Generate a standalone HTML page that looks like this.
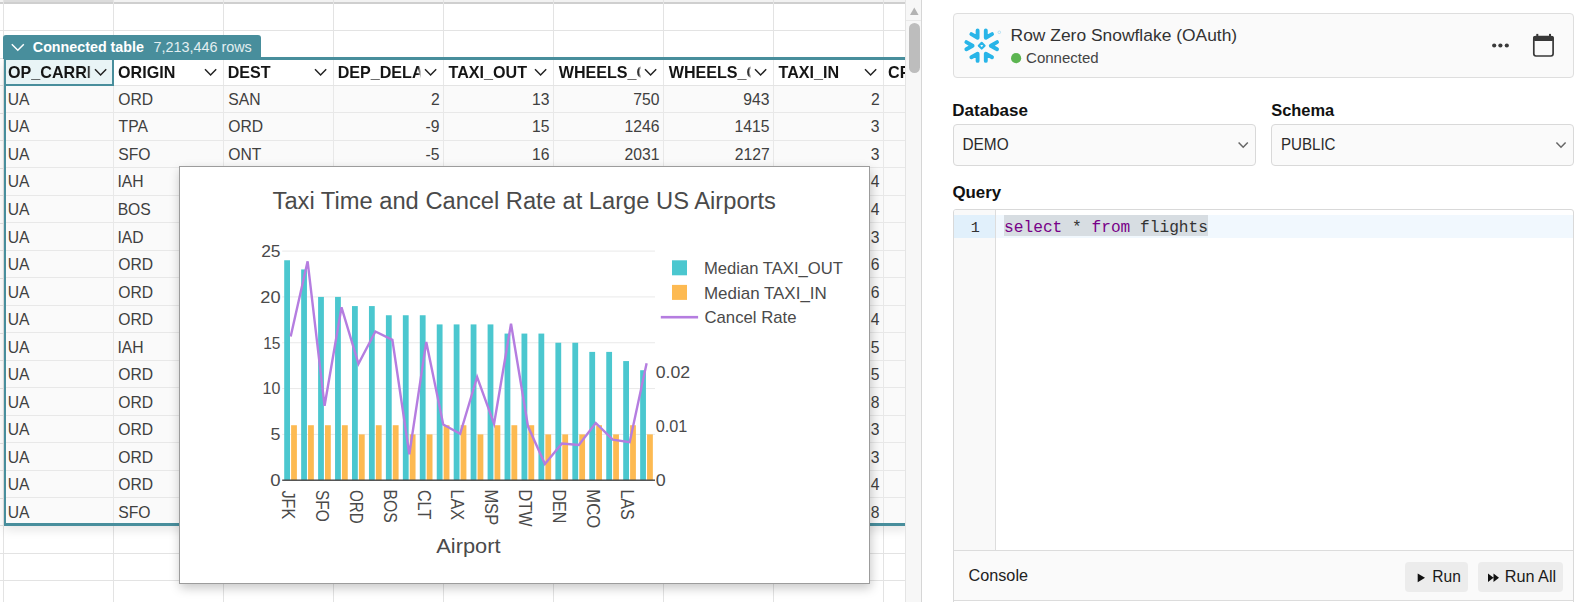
<!DOCTYPE html>
<html><head><meta charset="utf-8"><title>Row Zero</title>
<style>
html,body{margin:0;padding:0;width:1577px;height:602px;overflow:hidden;background:#fff;font-family:"Liberation Sans",sans-serif;}
</style></head><body>
<div style="position:relative;width:1577px;height:602px;overflow:hidden">
<div id="grid" style="position:absolute;left:0;top:0;width:905px;height:602px;overflow:hidden;background:#fff">
<div style="position:absolute;left:0;top:0;width:905px;height:3px;background:#f2f2f2"></div>
<div style="position:absolute;left:3px;top:0;width:110px;height:3px;background:#dcdcdc"></div>
<div style="position:absolute;left:0;top:2px;width:905px;height:2px;background:#cfcfcf"></div>
<div style="position:absolute;left:3px;top:0;width:1px;height:602px;background:#e3e3e3"></div>
<div style="position:absolute;left:113px;top:0;width:1px;height:602px;background:#e3e3e3"></div>
<div style="position:absolute;left:223px;top:0;width:1px;height:602px;background:#e3e3e3"></div>
<div style="position:absolute;left:333px;top:0;width:1px;height:602px;background:#e3e3e3"></div>
<div style="position:absolute;left:443px;top:0;width:1px;height:602px;background:#e3e3e3"></div>
<div style="position:absolute;left:553px;top:0;width:1px;height:602px;background:#e3e3e3"></div>
<div style="position:absolute;left:663px;top:0;width:1px;height:602px;background:#e3e3e3"></div>
<div style="position:absolute;left:773px;top:0;width:1px;height:602px;background:#e3e3e3"></div>
<div style="position:absolute;left:883px;top:0;width:1px;height:602px;background:#e3e3e3"></div>
<div style="position:absolute;left:0;top:30px;width:905px;height:1px;background:#e3e3e3"></div>
<div style="position:absolute;left:0;top:58px;width:905px;height:1px;background:#e3e3e3"></div>
<div style="position:absolute;left:0;top:85px;width:905px;height:1px;background:#e3e3e3"></div>
<div style="position:absolute;left:0;top:113px;width:905px;height:1px;background:#e3e3e3"></div>
<div style="position:absolute;left:0;top:140px;width:905px;height:1px;background:#e3e3e3"></div>
<div style="position:absolute;left:0;top:168px;width:905px;height:1px;background:#e3e3e3"></div>
<div style="position:absolute;left:0;top:195px;width:905px;height:1px;background:#e3e3e3"></div>
<div style="position:absolute;left:0;top:223px;width:905px;height:1px;background:#e3e3e3"></div>
<div style="position:absolute;left:0;top:250px;width:905px;height:1px;background:#e3e3e3"></div>
<div style="position:absolute;left:0;top:278px;width:905px;height:1px;background:#e3e3e3"></div>
<div style="position:absolute;left:0;top:305px;width:905px;height:1px;background:#e3e3e3"></div>
<div style="position:absolute;left:0;top:333px;width:905px;height:1px;background:#e3e3e3"></div>
<div style="position:absolute;left:0;top:360px;width:905px;height:1px;background:#e3e3e3"></div>
<div style="position:absolute;left:0;top:388px;width:905px;height:1px;background:#e3e3e3"></div>
<div style="position:absolute;left:0;top:415px;width:905px;height:1px;background:#e3e3e3"></div>
<div style="position:absolute;left:0;top:443px;width:905px;height:1px;background:#e3e3e3"></div>
<div style="position:absolute;left:0;top:470px;width:905px;height:1px;background:#e3e3e3"></div>
<div style="position:absolute;left:0;top:498px;width:905px;height:1px;background:#e3e3e3"></div>
<div style="position:absolute;left:0;top:525px;width:905px;height:1px;background:#e3e3e3"></div>
<div style="position:absolute;left:0;top:553px;width:905px;height:1px;background:#e3e3e3"></div>
<div style="position:absolute;left:0;top:580px;width:905px;height:1px;background:#e3e3e3"></div>
<div style="position:absolute;left:4px;top:60px;width:905px;height:465px;box-shadow:0 5px 10px rgba(0,0,0,0.10)"></div>
<div style="position:absolute;left:3.5px;top:57px;width:902px;height:468.5px;background:#fafafa"></div>
<div style="position:absolute;left:3.5px;top:57px;width:902px;height:28.5px;background:#fff"></div>
<div style="position:absolute;left:113px;top:57px;width:1px;height:466.5px;background:#e8e8e8"></div>
<div style="position:absolute;left:223px;top:57px;width:1px;height:466.5px;background:#e8e8e8"></div>
<div style="position:absolute;left:333px;top:57px;width:1px;height:466.5px;background:#e8e8e8"></div>
<div style="position:absolute;left:443px;top:57px;width:1px;height:466.5px;background:#e8e8e8"></div>
<div style="position:absolute;left:553px;top:57px;width:1px;height:466.5px;background:#e8e8e8"></div>
<div style="position:absolute;left:663px;top:57px;width:1px;height:466.5px;background:#e8e8e8"></div>
<div style="position:absolute;left:773px;top:57px;width:1px;height:466.5px;background:#e8e8e8"></div>
<div style="position:absolute;left:883px;top:57px;width:1px;height:466.5px;background:#e8e8e8"></div>
<div style="position:absolute;left:3.5px;top:112px;width:902px;height:1px;background:#e8e8e8"></div>
<div style="position:absolute;left:3.5px;top:140px;width:902px;height:1px;background:#e8e8e8"></div>
<div style="position:absolute;left:3.5px;top:167px;width:902px;height:1px;background:#e8e8e8"></div>
<div style="position:absolute;left:3.5px;top:195px;width:902px;height:1px;background:#e8e8e8"></div>
<div style="position:absolute;left:3.5px;top:222px;width:902px;height:1px;background:#e8e8e8"></div>
<div style="position:absolute;left:3.5px;top:250px;width:902px;height:1px;background:#e8e8e8"></div>
<div style="position:absolute;left:3.5px;top:277px;width:902px;height:1px;background:#e8e8e8"></div>
<div style="position:absolute;left:3.5px;top:305px;width:902px;height:1px;background:#e8e8e8"></div>
<div style="position:absolute;left:3.5px;top:332px;width:902px;height:1px;background:#e8e8e8"></div>
<div style="position:absolute;left:3.5px;top:360px;width:902px;height:1px;background:#e8e8e8"></div>
<div style="position:absolute;left:3.5px;top:387px;width:902px;height:1px;background:#e8e8e8"></div>
<div style="position:absolute;left:3.5px;top:415px;width:902px;height:1px;background:#e8e8e8"></div>
<div style="position:absolute;left:3.5px;top:442px;width:902px;height:1px;background:#e8e8e8"></div>
<div style="position:absolute;left:3.5px;top:470px;width:902px;height:1px;background:#e8e8e8"></div>
<div style="position:absolute;left:3.5px;top:497px;width:902px;height:1px;background:#e8e8e8"></div>
<div style="position:absolute;left:3.5px;top:525px;width:902px;height:1px;background:#e8e8e8"></div>
<div style="position:absolute;left:3.5px;top:85px;width:902px;height:1px;background:#e4e4e4"></div>
<div style="position:absolute;left:3.5px;top:58.5px;width:106.5px;height:25px;background:#e9f4f6;border:2px solid #488e9c;border-top:0"></div>
<div style="position:absolute;left:3.5px;top:57px;width:902px;height:2.8px;background:#488e9c"></div>
<div style="position:absolute;left:3.5px;top:57px;width:2px;height:468.5px;background:#488e9c"></div>
<div style="position:absolute;left:3.5px;top:523.0px;width:902px;height:3px;background:#488e9c"></div>
<div style="position:absolute;left:3.4px;top:35px;width:258px;height:24px;background:#488e9c;border-radius:3px 3px 0 0"></div>
<svg style="position:absolute;left:0;top:0" width="905" height="602" viewBox="0 0 905 602">
<path d="M11.8 44.3 L17.8 50.2 L23.8 44.3" fill="none" stroke="#fff" stroke-width="1.5"/>
<text transform="translate(32.83,51.90) scale(0.9959,1)" font-family='"Liberation Sans", sans-serif' font-weight="700" font-size="14.35" fill="#fff" >Connected table</text>
<text transform="translate(153.38,51.90) scale(1.0039,1)" font-family='"Liberation Sans", sans-serif' font-weight="400" font-size="14.35" fill="#e3eff1" >7,213,446 rows</text>
<defs>
<clipPath id="hc0"><rect x="3.5" y="58" width="87" height="28"/></clipPath>
<linearGradient id="hg0" x1="88.0" x2="91.5" y1="0" y2="0" gradientUnits="userSpaceOnUse"><stop offset="0" stop-color="#fff" stop-opacity="1"/><stop offset="1" stop-color="#fff" stop-opacity="0"/></linearGradient>
<mask id="hm0"><rect x="3.5" y="58" width="100" height="28" fill="url(#hg0)"/></mask>
<clipPath id="hc1"><rect x="113.5" y="58" width="87" height="28"/></clipPath>
<linearGradient id="hg1" x1="198.0" x2="201.5" y1="0" y2="0" gradientUnits="userSpaceOnUse"><stop offset="0" stop-color="#fff" stop-opacity="1"/><stop offset="1" stop-color="#fff" stop-opacity="0"/></linearGradient>
<mask id="hm1"><rect x="113.5" y="58" width="100" height="28" fill="url(#hg1)"/></mask>
<clipPath id="hc2"><rect x="223.5" y="58" width="87" height="28"/></clipPath>
<linearGradient id="hg2" x1="308.0" x2="311.5" y1="0" y2="0" gradientUnits="userSpaceOnUse"><stop offset="0" stop-color="#fff" stop-opacity="1"/><stop offset="1" stop-color="#fff" stop-opacity="0"/></linearGradient>
<mask id="hm2"><rect x="223.5" y="58" width="100" height="28" fill="url(#hg2)"/></mask>
<clipPath id="hc3"><rect x="333.5" y="58" width="87" height="28"/></clipPath>
<linearGradient id="hg3" x1="418.0" x2="421.5" y1="0" y2="0" gradientUnits="userSpaceOnUse"><stop offset="0" stop-color="#fff" stop-opacity="1"/><stop offset="1" stop-color="#fff" stop-opacity="0"/></linearGradient>
<mask id="hm3"><rect x="333.5" y="58" width="100" height="28" fill="url(#hg3)"/></mask>
<clipPath id="hc4"><rect x="443.5" y="58" width="87" height="28"/></clipPath>
<linearGradient id="hg4" x1="528.0" x2="531.5" y1="0" y2="0" gradientUnits="userSpaceOnUse"><stop offset="0" stop-color="#fff" stop-opacity="1"/><stop offset="1" stop-color="#fff" stop-opacity="0"/></linearGradient>
<mask id="hm4"><rect x="443.5" y="58" width="100" height="28" fill="url(#hg4)"/></mask>
<clipPath id="hc5"><rect x="553.5" y="58" width="87" height="28"/></clipPath>
<linearGradient id="hg5" x1="638.0" x2="641.5" y1="0" y2="0" gradientUnits="userSpaceOnUse"><stop offset="0" stop-color="#fff" stop-opacity="1"/><stop offset="1" stop-color="#fff" stop-opacity="0"/></linearGradient>
<mask id="hm5"><rect x="553.5" y="58" width="100" height="28" fill="url(#hg5)"/></mask>
<clipPath id="hc6"><rect x="663.5" y="58" width="87" height="28"/></clipPath>
<linearGradient id="hg6" x1="748.0" x2="751.5" y1="0" y2="0" gradientUnits="userSpaceOnUse"><stop offset="0" stop-color="#fff" stop-opacity="1"/><stop offset="1" stop-color="#fff" stop-opacity="0"/></linearGradient>
<mask id="hm6"><rect x="663.5" y="58" width="100" height="28" fill="url(#hg6)"/></mask>
<clipPath id="hc7"><rect x="773.5" y="58" width="87" height="28"/></clipPath>
<linearGradient id="hg7" x1="858.0" x2="861.5" y1="0" y2="0" gradientUnits="userSpaceOnUse"><stop offset="0" stop-color="#fff" stop-opacity="1"/><stop offset="1" stop-color="#fff" stop-opacity="0"/></linearGradient>
<mask id="hm7"><rect x="773.5" y="58" width="100" height="28" fill="url(#hg7)"/></mask>
<clipPath id="hc8"><rect x="883.5" y="58" width="87" height="28"/></clipPath>
<linearGradient id="hg8" x1="968.0" x2="971.5" y1="0" y2="0" gradientUnits="userSpaceOnUse"><stop offset="0" stop-color="#fff" stop-opacity="1"/><stop offset="1" stop-color="#fff" stop-opacity="0"/></linearGradient>
<mask id="hm8"><rect x="883.5" y="58" width="100" height="28" fill="url(#hg8)"/></mask>
</defs>
<g mask="url(#hm0)"><text transform="translate(8.06,77.90) scale(0.9586,1)" font-family='"Liberation Sans", sans-serif' font-weight="700" font-size="16.81" fill="#151515" >OP_CARRIER</text></g>
<path d="M95.0 69.3 L100.6 75 L106.2 69.3" fill="none" stroke="#222" stroke-width="1.5"/>
<g mask="url(#hm1)"><text transform="translate(118.06,77.90) scale(0.9586,1)" font-family='"Liberation Sans", sans-serif' font-weight="700" font-size="16.81" fill="#151515" >ORIGIN</text></g>
<path d="M205.0 69.3 L210.6 75 L216.2 69.3" fill="none" stroke="#222" stroke-width="1.5"/>
<g mask="url(#hm2)"><text transform="translate(227.65,77.90) scale(0.9586,1)" font-family='"Liberation Sans", sans-serif' font-weight="700" font-size="16.81" fill="#151515" >DEST</text></g>
<path d="M315.0 69.3 L320.6 75 L326.2 69.3" fill="none" stroke="#222" stroke-width="1.5"/>
<g mask="url(#hm3)"><text transform="translate(337.65,77.90) scale(0.9586,1)" font-family='"Liberation Sans", sans-serif' font-weight="700" font-size="16.81" fill="#151515" >DEP_DELAY</text></g>
<path d="M425.0 69.3 L430.6 75 L436.2 69.3" fill="none" stroke="#222" stroke-width="1.5"/>
<g mask="url(#hm4)"><text transform="translate(448.54,77.90) scale(0.9586,1)" font-family='"Liberation Sans", sans-serif' font-weight="700" font-size="16.81" fill="#151515" >TAXI_OUT</text></g>
<path d="M535.0 69.3 L540.6 75 L546.2 69.3" fill="none" stroke="#222" stroke-width="1.5"/>
<g mask="url(#hm5)"><text transform="translate(558.70,77.90) scale(0.9586,1)" font-family='"Liberation Sans", sans-serif' font-weight="700" font-size="16.81" fill="#151515" >WHEELS_OFF</text></g>
<path d="M645.0 69.3 L650.6 75 L656.2 69.3" fill="none" stroke="#222" stroke-width="1.5"/>
<g mask="url(#hm6)"><text transform="translate(668.70,77.90) scale(0.9586,1)" font-family='"Liberation Sans", sans-serif' font-weight="700" font-size="16.81" fill="#151515" >WHEELS_ON</text></g>
<path d="M755.0 69.3 L760.6 75 L766.2 69.3" fill="none" stroke="#222" stroke-width="1.5"/>
<g mask="url(#hm7)"><text transform="translate(778.54,77.90) scale(0.9586,1)" font-family='"Liberation Sans", sans-serif' font-weight="700" font-size="16.81" fill="#151515" >TAXI_IN</text></g>
<path d="M865.0 69.3 L870.6 75 L876.2 69.3" fill="none" stroke="#222" stroke-width="1.5"/>
<g mask="url(#hm8)"><text transform="translate(888.06,77.90) scale(0.9586,1)" font-family='"Liberation Sans", sans-serif' font-weight="700" font-size="16.81" fill="#151515" >CRS_ARR_TIME</text></g>
<text transform="translate(7.72,104.90) scale(0.9519,1)" font-family='"Liberation Sans", sans-serif' font-weight="400" font-size="16.52" fill="#404040" >UA</text>
<text transform="translate(118.19,104.90) scale(0.9519,1)" font-family='"Liberation Sans", sans-serif' font-weight="400" font-size="16.52" fill="#404040" >ORD</text>
<text transform="translate(228.19,104.90) scale(0.9519,1)" font-family='"Liberation Sans", sans-serif' font-weight="400" font-size="16.52" fill="#404040" >SAN</text>
<text transform="translate(430.96,104.90) scale(0.9519,1)" font-family='"Liberation Sans", sans-serif' font-weight="400" font-size="16.52" fill="#404040" >2</text>
<text transform="translate(532.07,104.90) scale(0.9519,1)" font-family='"Liberation Sans", sans-serif' font-weight="400" font-size="16.52" fill="#404040" >13</text>
<text transform="translate(633.26,104.90) scale(0.9519,1)" font-family='"Liberation Sans", sans-serif' font-weight="400" font-size="16.52" fill="#404040" >750</text>
<text transform="translate(743.34,104.90) scale(0.9519,1)" font-family='"Liberation Sans", sans-serif' font-weight="400" font-size="16.52" fill="#404040" >943</text>
<text transform="translate(870.96,104.90) scale(0.9519,1)" font-family='"Liberation Sans", sans-serif' font-weight="400" font-size="16.52" fill="#404040" >2</text>
<text transform="translate(7.72,132.43) scale(0.9519,1)" font-family='"Liberation Sans", sans-serif' font-weight="400" font-size="16.52" fill="#404040" >UA</text>
<text transform="translate(118.59,132.43) scale(0.9519,1)" font-family='"Liberation Sans", sans-serif' font-weight="400" font-size="16.52" fill="#404040" >TPA</text>
<text transform="translate(228.19,132.43) scale(0.9519,1)" font-family='"Liberation Sans", sans-serif' font-weight="400" font-size="16.52" fill="#404040" >ORD</text>
<text transform="translate(425.61,132.43) scale(0.9519,1)" font-family='"Liberation Sans", sans-serif' font-weight="400" font-size="16.52" fill="#404040" >-9</text>
<text transform="translate(532.07,132.43) scale(0.9519,1)" font-family='"Liberation Sans", sans-serif' font-weight="400" font-size="16.52" fill="#404040" >15</text>
<text transform="translate(624.53,132.43) scale(0.9519,1)" font-family='"Liberation Sans", sans-serif' font-weight="400" font-size="16.52" fill="#404040" >1246</text>
<text transform="translate(734.53,132.43) scale(0.9519,1)" font-family='"Liberation Sans", sans-serif' font-weight="400" font-size="16.52" fill="#404040" >1415</text>
<text transform="translate(870.80,132.43) scale(0.9519,1)" font-family='"Liberation Sans", sans-serif' font-weight="400" font-size="16.52" fill="#404040" >3</text>
<text transform="translate(7.72,159.96) scale(0.9519,1)" font-family='"Liberation Sans", sans-serif' font-weight="400" font-size="16.52" fill="#404040" >UA</text>
<text transform="translate(118.19,159.96) scale(0.9519,1)" font-family='"Liberation Sans", sans-serif' font-weight="400" font-size="16.52" fill="#404040" >SFO</text>
<text transform="translate(228.19,159.96) scale(0.9519,1)" font-family='"Liberation Sans", sans-serif' font-weight="400" font-size="16.52" fill="#404040" >ONT</text>
<text transform="translate(425.53,159.96) scale(0.9519,1)" font-family='"Liberation Sans", sans-serif' font-weight="400" font-size="16.52" fill="#404040" >-5</text>
<text transform="translate(532.07,159.96) scale(0.9519,1)" font-family='"Liberation Sans", sans-serif' font-weight="400" font-size="16.52" fill="#404040" >16</text>
<text transform="translate(624.61,159.96) scale(0.9519,1)" font-family='"Liberation Sans", sans-serif' font-weight="400" font-size="16.52" fill="#404040" >2031</text>
<text transform="translate(734.69,159.96) scale(0.9519,1)" font-family='"Liberation Sans", sans-serif' font-weight="400" font-size="16.52" fill="#404040" >2127</text>
<text transform="translate(870.80,159.96) scale(0.9519,1)" font-family='"Liberation Sans", sans-serif' font-weight="400" font-size="16.52" fill="#404040" >3</text>
<text transform="translate(7.72,187.49) scale(0.9519,1)" font-family='"Liberation Sans", sans-serif' font-weight="400" font-size="16.52" fill="#404040" >UA</text>
<text transform="translate(117.48,187.49) scale(0.9519,1)" font-family='"Liberation Sans", sans-serif' font-weight="400" font-size="16.52" fill="#404040" >IAH</text>
<text transform="translate(870.64,187.49) scale(0.9519,1)" font-family='"Liberation Sans", sans-serif' font-weight="400" font-size="16.52" fill="#404040" >4</text>
<text transform="translate(7.72,215.02) scale(0.9519,1)" font-family='"Liberation Sans", sans-serif' font-weight="400" font-size="16.52" fill="#404040" >UA</text>
<text transform="translate(117.64,215.02) scale(0.9519,1)" font-family='"Liberation Sans", sans-serif' font-weight="400" font-size="16.52" fill="#404040" >BOS</text>
<text transform="translate(870.64,215.02) scale(0.9519,1)" font-family='"Liberation Sans", sans-serif' font-weight="400" font-size="16.52" fill="#404040" >4</text>
<text transform="translate(7.72,242.55) scale(0.9519,1)" font-family='"Liberation Sans", sans-serif' font-weight="400" font-size="16.52" fill="#404040" >UA</text>
<text transform="translate(117.48,242.55) scale(0.9519,1)" font-family='"Liberation Sans", sans-serif' font-weight="400" font-size="16.52" fill="#404040" >IAD</text>
<text transform="translate(870.80,242.55) scale(0.9519,1)" font-family='"Liberation Sans", sans-serif' font-weight="400" font-size="16.52" fill="#404040" >3</text>
<text transform="translate(7.72,270.08) scale(0.9519,1)" font-family='"Liberation Sans", sans-serif' font-weight="400" font-size="16.52" fill="#404040" >UA</text>
<text transform="translate(118.19,270.08) scale(0.9519,1)" font-family='"Liberation Sans", sans-serif' font-weight="400" font-size="16.52" fill="#404040" >ORD</text>
<text transform="translate(870.80,270.08) scale(0.9519,1)" font-family='"Liberation Sans", sans-serif' font-weight="400" font-size="16.52" fill="#404040" >6</text>
<text transform="translate(7.72,297.61) scale(0.9519,1)" font-family='"Liberation Sans", sans-serif' font-weight="400" font-size="16.52" fill="#404040" >UA</text>
<text transform="translate(118.19,297.61) scale(0.9519,1)" font-family='"Liberation Sans", sans-serif' font-weight="400" font-size="16.52" fill="#404040" >ORD</text>
<text transform="translate(870.80,297.61) scale(0.9519,1)" font-family='"Liberation Sans", sans-serif' font-weight="400" font-size="16.52" fill="#404040" >6</text>
<text transform="translate(7.72,325.14) scale(0.9519,1)" font-family='"Liberation Sans", sans-serif' font-weight="400" font-size="16.52" fill="#404040" >UA</text>
<text transform="translate(118.19,325.14) scale(0.9519,1)" font-family='"Liberation Sans", sans-serif' font-weight="400" font-size="16.52" fill="#404040" >ORD</text>
<text transform="translate(870.64,325.14) scale(0.9519,1)" font-family='"Liberation Sans", sans-serif' font-weight="400" font-size="16.52" fill="#404040" >4</text>
<text transform="translate(7.72,352.67) scale(0.9519,1)" font-family='"Liberation Sans", sans-serif' font-weight="400" font-size="16.52" fill="#404040" >UA</text>
<text transform="translate(117.48,352.67) scale(0.9519,1)" font-family='"Liberation Sans", sans-serif' font-weight="400" font-size="16.52" fill="#404040" >IAH</text>
<text transform="translate(870.80,352.67) scale(0.9519,1)" font-family='"Liberation Sans", sans-serif' font-weight="400" font-size="16.52" fill="#404040" >5</text>
<text transform="translate(7.72,380.20) scale(0.9519,1)" font-family='"Liberation Sans", sans-serif' font-weight="400" font-size="16.52" fill="#404040" >UA</text>
<text transform="translate(118.19,380.20) scale(0.9519,1)" font-family='"Liberation Sans", sans-serif' font-weight="400" font-size="16.52" fill="#404040" >ORD</text>
<text transform="translate(870.80,380.20) scale(0.9519,1)" font-family='"Liberation Sans", sans-serif' font-weight="400" font-size="16.52" fill="#404040" >5</text>
<text transform="translate(7.72,407.73) scale(0.9519,1)" font-family='"Liberation Sans", sans-serif' font-weight="400" font-size="16.52" fill="#404040" >UA</text>
<text transform="translate(118.19,407.73) scale(0.9519,1)" font-family='"Liberation Sans", sans-serif' font-weight="400" font-size="16.52" fill="#404040" >ORD</text>
<text transform="translate(870.80,407.73) scale(0.9519,1)" font-family='"Liberation Sans", sans-serif' font-weight="400" font-size="16.52" fill="#404040" >8</text>
<text transform="translate(7.72,435.26) scale(0.9519,1)" font-family='"Liberation Sans", sans-serif' font-weight="400" font-size="16.52" fill="#404040" >UA</text>
<text transform="translate(118.19,435.26) scale(0.9519,1)" font-family='"Liberation Sans", sans-serif' font-weight="400" font-size="16.52" fill="#404040" >ORD</text>
<text transform="translate(870.80,435.26) scale(0.9519,1)" font-family='"Liberation Sans", sans-serif' font-weight="400" font-size="16.52" fill="#404040" >3</text>
<text transform="translate(7.72,462.79) scale(0.9519,1)" font-family='"Liberation Sans", sans-serif' font-weight="400" font-size="16.52" fill="#404040" >UA</text>
<text transform="translate(118.19,462.79) scale(0.9519,1)" font-family='"Liberation Sans", sans-serif' font-weight="400" font-size="16.52" fill="#404040" >ORD</text>
<text transform="translate(870.80,462.79) scale(0.9519,1)" font-family='"Liberation Sans", sans-serif' font-weight="400" font-size="16.52" fill="#404040" >3</text>
<text transform="translate(7.72,490.32) scale(0.9519,1)" font-family='"Liberation Sans", sans-serif' font-weight="400" font-size="16.52" fill="#404040" >UA</text>
<text transform="translate(118.19,490.32) scale(0.9519,1)" font-family='"Liberation Sans", sans-serif' font-weight="400" font-size="16.52" fill="#404040" >ORD</text>
<text transform="translate(870.64,490.32) scale(0.9519,1)" font-family='"Liberation Sans", sans-serif' font-weight="400" font-size="16.52" fill="#404040" >4</text>
<text transform="translate(7.72,517.85) scale(0.9519,1)" font-family='"Liberation Sans", sans-serif' font-weight="400" font-size="16.52" fill="#404040" >UA</text>
<text transform="translate(118.19,517.85) scale(0.9519,1)" font-family='"Liberation Sans", sans-serif' font-weight="400" font-size="16.52" fill="#404040" >SFO</text>
<text transform="translate(870.80,517.85) scale(0.9519,1)" font-family='"Liberation Sans", sans-serif' font-weight="400" font-size="16.52" fill="#404040" >8</text>
</svg>
<div style="position:absolute;left:905px;top:0;width:16px;height:602px;background:#f7f7f7;border-left:1px solid #e2e2e2;border-right:1px solid #d9d9d9;box-sizing:content-box"></div>
</div>
<div style="position:absolute;left:905px;top:0;width:17px;height:602px;background:#f7f7f7;border-left:1px solid #e4e4e4;border-right:1px solid #d6d6d6;box-sizing:border-box"></div>
<div style="position:absolute;left:906px;top:20px;width:15px;height:1px;background:#e8e8e8"></div>
<svg style="position:absolute;left:905px;top:0" width="17" height="20"><path d="M5 15 L9.3 7.5 L13.6 15 Z" fill="#b3b3b3"/></svg>
<div style="position:absolute;left:909px;top:23.2px;width:11px;height:50px;background:#bdbdbd;border-radius:5.5px"></div>
<div id="chart" style="position:absolute;left:179px;top:166px;width:689px;height:416px;background:#fff;border:1px solid #9c9c9c;box-shadow:1px 4px 10px rgba(0,0,0,0.22)">
<svg style="position:absolute;left:-1px;top:-1px" width="691" height="418" viewBox="179 166 691 418">
<text transform="translate(272.53,209.00) scale(0.9628,1)" font-family='"Liberation Sans", sans-serif' font-weight="400" font-size="24.64" fill="#4a4a4a" >Taxi Time and Cancel Rate at Large US Airports</text>
<rect x="282.2" y="433.88" width="372.8" height="1" fill="#e9e9e9"/>
<rect x="282.2" y="388.06" width="372.8" height="1" fill="#e9e9e9"/>
<rect x="282.2" y="342.24" width="372.8" height="1" fill="#e9e9e9"/>
<rect x="282.2" y="296.42" width="372.8" height="1" fill="#e9e9e9"/>
<rect x="282.2" y="250.60" width="372.8" height="1" fill="#e9e9e9"/>
<rect x="284.20" y="260.26" width="5.8" height="219.94" fill="#4bc7cf"/>
<rect x="291.10" y="425.22" width="5.8" height="54.98" fill="#fdba52"/>
<rect x="301.15" y="269.43" width="5.8" height="210.77" fill="#4bc7cf"/>
<rect x="308.05" y="425.22" width="5.8" height="54.98" fill="#fdba52"/>
<rect x="318.10" y="296.92" width="5.8" height="183.28" fill="#4bc7cf"/>
<rect x="325.00" y="425.22" width="5.8" height="54.98" fill="#fdba52"/>
<rect x="335.05" y="296.92" width="5.8" height="183.28" fill="#4bc7cf"/>
<rect x="341.95" y="425.22" width="5.8" height="54.98" fill="#fdba52"/>
<rect x="352.00" y="306.08" width="5.8" height="174.12" fill="#4bc7cf"/>
<rect x="358.90" y="434.38" width="5.8" height="45.82" fill="#fdba52"/>
<rect x="368.95" y="306.08" width="5.8" height="174.12" fill="#4bc7cf"/>
<rect x="375.85" y="425.22" width="5.8" height="54.98" fill="#fdba52"/>
<rect x="385.90" y="315.25" width="5.8" height="164.95" fill="#4bc7cf"/>
<rect x="392.80" y="425.22" width="5.8" height="54.98" fill="#fdba52"/>
<rect x="402.85" y="315.25" width="5.8" height="164.95" fill="#4bc7cf"/>
<rect x="409.75" y="434.38" width="5.8" height="45.82" fill="#fdba52"/>
<rect x="419.80" y="315.25" width="5.8" height="164.95" fill="#4bc7cf"/>
<rect x="426.70" y="434.38" width="5.8" height="45.82" fill="#fdba52"/>
<rect x="436.75" y="324.41" width="5.8" height="155.79" fill="#4bc7cf"/>
<rect x="443.65" y="425.22" width="5.8" height="54.98" fill="#fdba52"/>
<rect x="453.70" y="324.41" width="5.8" height="155.79" fill="#4bc7cf"/>
<rect x="460.60" y="425.22" width="5.8" height="54.98" fill="#fdba52"/>
<rect x="470.65" y="324.41" width="5.8" height="155.79" fill="#4bc7cf"/>
<rect x="477.55" y="434.38" width="5.8" height="45.82" fill="#fdba52"/>
<rect x="487.60" y="324.41" width="5.8" height="155.79" fill="#4bc7cf"/>
<rect x="494.50" y="425.22" width="5.8" height="54.98" fill="#fdba52"/>
<rect x="504.55" y="333.58" width="5.8" height="146.62" fill="#4bc7cf"/>
<rect x="511.45" y="425.22" width="5.8" height="54.98" fill="#fdba52"/>
<rect x="521.50" y="333.58" width="5.8" height="146.62" fill="#4bc7cf"/>
<rect x="528.40" y="425.22" width="5.8" height="54.98" fill="#fdba52"/>
<rect x="538.45" y="333.58" width="5.8" height="146.62" fill="#4bc7cf"/>
<rect x="545.35" y="434.38" width="5.8" height="45.82" fill="#fdba52"/>
<rect x="555.40" y="342.74" width="5.8" height="137.46" fill="#4bc7cf"/>
<rect x="562.30" y="434.38" width="5.8" height="45.82" fill="#fdba52"/>
<rect x="572.35" y="342.74" width="5.8" height="137.46" fill="#4bc7cf"/>
<rect x="579.25" y="434.38" width="5.8" height="45.82" fill="#fdba52"/>
<rect x="589.30" y="351.90" width="5.8" height="128.30" fill="#4bc7cf"/>
<rect x="596.20" y="425.22" width="5.8" height="54.98" fill="#fdba52"/>
<rect x="606.25" y="351.90" width="5.8" height="128.30" fill="#4bc7cf"/>
<rect x="613.15" y="434.38" width="5.8" height="45.82" fill="#fdba52"/>
<rect x="623.20" y="361.07" width="5.8" height="119.13" fill="#4bc7cf"/>
<rect x="630.10" y="425.22" width="5.8" height="54.98" fill="#fdba52"/>
<rect x="640.15" y="370.23" width="5.8" height="109.97" fill="#4bc7cf"/>
<rect x="647.05" y="434.38" width="5.8" height="45.82" fill="#fdba52"/>
<polyline points="290.68,336.50 307.62,261.30 324.57,405.80 341.52,307.30 358.47,363.80 375.42,331.50 392.38,339.90 409.32,454.20 426.27,341.90 443.23,424.50 460.17,433.80 477.12,377.00 494.07,423.80 511.02,323.70 527.97,426.30 544.92,463.90 561.88,443.60 578.83,444.90 595.77,423.00 612.72,439.60 629.67,442.20 646.62,363.30" fill="none" stroke="#b57de0" stroke-width="2.4" stroke-linejoin="miter"/>
<rect x="282.2" y="479.50" width="372.8" height="1.4" fill="#444"/>
<text transform="translate(270.16,486.10) scale(1.0842,1)" font-family='"Liberation Sans", sans-serif' font-weight="400" font-size="17.10" fill="#4a4a4a" >0</text>
<text transform="translate(270.58,440.28) scale(1.0464,1)" font-family='"Liberation Sans", sans-serif' font-weight="400" font-size="17.10" fill="#4a4a4a" >5</text>
<text transform="translate(262.60,394.46) scale(0.9356,1)" font-family='"Liberation Sans", sans-serif' font-weight="400" font-size="17.10" fill="#4a4a4a" >10</text>
<text transform="translate(263.13,348.64) scale(0.9109,1)" font-family='"Liberation Sans", sans-serif' font-weight="400" font-size="17.10" fill="#4a4a4a" >15</text>
<text transform="translate(260.29,302.82) scale(1.0611,1)" font-family='"Liberation Sans", sans-serif' font-weight="400" font-size="17.10" fill="#4a4a4a" >20</text>
<text transform="translate(261.13,257.00) scale(1.0204,1)" font-family='"Liberation Sans", sans-serif' font-weight="400" font-size="17.10" fill="#4a4a4a" >25</text>
<text transform="translate(655.68,486.00) scale(1.0657,1)" font-family='"Liberation Sans", sans-serif' font-weight="400" font-size="16.81" fill="#4a4a4a" >0</text>
<text transform="translate(655.75,431.90) scale(0.9658,1)" font-family='"Liberation Sans", sans-serif' font-weight="400" font-size="16.81" fill="#4a4a4a" >0.01</text>
<text transform="translate(655.69,377.80) scale(1.0518,1)" font-family='"Liberation Sans", sans-serif' font-weight="400" font-size="16.81" fill="#4a4a4a" >0.02</text>
<text transform="translate(281.98,490.46) rotate(90) scale(0.9146,1)" font-family='"Liberation Sans", sans-serif' font-weight="400" font-size="17.68" fill="#4a4a4a">JFK</text>
<text transform="translate(315.88,490.00) rotate(90) scale(0.8750,1)" font-family='"Liberation Sans", sans-serif' font-weight="400" font-size="17.68" fill="#4a4a4a">SFO</text>
<text transform="translate(349.77,490.02) rotate(90) scale(0.8577,1)" font-family='"Liberation Sans", sans-serif' font-weight="400" font-size="17.68" fill="#4a4a4a">ORD</text>
<text transform="translate(383.68,489.44) rotate(90) scale(0.8918,1)" font-family='"Liberation Sans", sans-serif' font-weight="400" font-size="17.68" fill="#4a4a4a">BOS</text>
<text transform="translate(417.57,489.89) rotate(90) scale(0.9172,1)" font-family='"Liberation Sans", sans-serif' font-weight="400" font-size="17.68" fill="#4a4a4a">CLT</text>
<text transform="translate(451.47,489.39) rotate(90) scale(0.9226,1)" font-family='"Liberation Sans", sans-serif' font-weight="400" font-size="17.68" fill="#4a4a4a">LAX</text>
<text transform="translate(485.38,489.38) rotate(90) scale(0.9338,1)" font-family='"Liberation Sans", sans-serif' font-weight="400" font-size="17.68" fill="#4a4a4a">MSP</text>
<text transform="translate(519.27,489.39) rotate(90) scale(0.9250,1)" font-family='"Liberation Sans", sans-serif' font-weight="400" font-size="17.68" fill="#4a4a4a">DTW</text>
<text transform="translate(553.17,489.42) rotate(90) scale(0.9078,1)" font-family='"Liberation Sans", sans-serif' font-weight="400" font-size="17.68" fill="#4a4a4a">DEN</text>
<text transform="translate(587.07,489.36) rotate(90) scale(0.9439,1)" font-family='"Liberation Sans", sans-serif' font-weight="400" font-size="17.68" fill="#4a4a4a">MCO</text>
<text transform="translate(620.97,489.42) rotate(90) scale(0.9068,1)" font-family='"Liberation Sans", sans-serif' font-weight="400" font-size="17.68" fill="#4a4a4a">LAS</text>
<text transform="translate(436.30,552.80) scale(1.0375,1)" font-family='"Liberation Sans", sans-serif' font-weight="400" font-size="21.01" fill="#4a4a4a" >Airport</text>
<rect x="672" y="260.3" width="15" height="15" fill="#4bc7cf"/>
<rect x="672" y="284.9" width="15" height="15" fill="#fdba52"/>
<rect x="660.8" y="315.9" width="37.3" height="2.6" fill="#b57de0"/>
<text transform="translate(703.97,274.00) scale(0.9901,1)" font-family='"Liberation Sans", sans-serif' font-weight="400" font-size="16.81" fill="#4a4a4a" >Median TAXI_OUT</text>
<text transform="translate(703.94,299.00) scale(1.0099,1)" font-family='"Liberation Sans", sans-serif' font-weight="400" font-size="16.81" fill="#4a4a4a" >Median TAXI_IN</text>
<text transform="translate(704.46,323.00) scale(0.9960,1)" font-family='"Liberation Sans", sans-serif' font-weight="400" font-size="16.81" fill="#4a4a4a" >Cancel Rate</text>
</svg></div>
<div style="position:absolute;left:953px;top:13px;width:621px;height:65px;box-sizing:border-box;background:#fafafa;border:1px solid #dedede;border-radius:4px"></div>
<div style="position:absolute;left:953px;top:124px;width:303px;height:42px;box-sizing:border-box;background:#fafafa;border:1px solid #d9d9d9;border-radius:4px"></div>
<div style="position:absolute;left:1271px;top:124px;width:303px;height:42px;box-sizing:border-box;background:#fafafa;border:1px solid #d9d9d9;border-radius:4px"></div>
<div style="position:absolute;left:953px;top:209px;width:621px;height:400px;box-sizing:border-box;background:#fff;border:1px solid #d9d9d9;border-radius:3px;overflow:hidden">
<div style="position:absolute;left:0;top:0;width:41px;height:340px;background:#f9f9f9;border-right:1px solid #dddddd"></div>
<div style="position:absolute;left:0;top:5px;width:41px;height:23px;background:#e1f0fb"></div>
<div style="position:absolute;left:42px;top:5px;width:580px;height:23px;background:#f1f8fe"></div>
<div style="position:absolute;left:50px;top:5.2px;width:204px;height:20.6px;background:#d7dde2"></div>
<div style="position:absolute;left:0;top:340px;width:621px;height:51px;background:#fafafa;border-top:1px solid #dcdcdc;border-bottom:1px solid #dcdcdc;box-sizing:border-box"></div>
</div>
<div style="position:absolute;left:1405px;top:561.8px;width:62.7px;height:30px;background:#ececec;border-radius:4px"></div>
<div style="position:absolute;left:1478px;top:561.8px;width:85px;height:30px;background:#ececec;border-radius:4px"></div>
<svg style="position:absolute;left:0;top:0;pointer-events:none" width="1577" height="602" viewBox="0 0 1577 602">
<path d="M997.04 42.10 L990.80 45.70 L997.04 49.30 M985.80 30.50 L985.80 37.70 L992.04 34.10 M971.36 34.10 L977.60 37.70 L977.60 30.50 M966.36 49.30 L972.60 45.70 L966.36 42.10 M977.60 60.90 L977.60 53.70 L971.36 57.30 M992.04 57.30 L985.80 53.70 L985.80 60.90" stroke="#29b5e8" stroke-width="3.9" stroke-linecap="round" stroke-linejoin="round" fill="none"/>
<path d="M978.80 45.70 L981.70 42.80 L984.60 45.70 L981.70 48.60 Z" stroke="#29b5e8" stroke-width="2.1" fill="none" stroke-linejoin="round"/>
<circle cx="999.3" cy="32.3" r="1.3" fill="none" stroke="#8fd3f0" stroke-width="0.6"/>
<text transform="translate(1010.60,40.60) scale(1.0745,1)" font-family='"Liberation Sans", sans-serif' font-weight="400" font-size="16.23" fill="#333" >Row Zero Snowflake (OAuth)</text>
<circle cx="1016.1" cy="58.2" r="5.1" fill="#5cb551"/>
<text transform="translate(1026.05,62.90) scale(1.0685,1)" font-family='"Liberation Sans", sans-serif' font-weight="400" font-size="14.06" fill="#444" >Connected</text>
<circle cx="1494.2" cy="45.5" r="2.1" fill="#3a3a3a"/>
<circle cx="1500.4" cy="45.5" r="2.1" fill="#3a3a3a"/>
<circle cx="1506.8" cy="45.5" r="2.1" fill="#3a3a3a"/>
<rect x="1533.8" y="36.7" width="19.3" height="19.3" rx="2.2" fill="none" stroke="#383838" stroke-width="1.7"/>
<rect x="1533" y="35.9" width="20.9" height="5" rx="2" fill="#383838"/>
<rect x="1536.3" y="33.9" width="2" height="3" fill="#383838"/>
<rect x="1549" y="33.9" width="2" height="3" fill="#383838"/>
<text transform="translate(952.29,115.70) scale(1.0385,1)" font-family='"Liberation Sans", sans-serif' font-weight="700" font-size="16.38" fill="#111" >Database</text>
<text transform="translate(1271.21,116.20) scale(1.0036,1)" font-family='"Liberation Sans", sans-serif' font-weight="700" font-size="16.38" fill="#111" >Schema</text>
<text transform="translate(962.47,150.10) scale(0.9321,1)" font-family='"Liberation Sans", sans-serif' font-weight="400" font-size="16.52" fill="#2a2a2a" >DEMO</text>
<text transform="translate(1280.89,150.10) scale(0.9161,1)" font-family='"Liberation Sans", sans-serif' font-weight="400" font-size="16.52" fill="#2a2a2a" >PUBLIC</text>
<path d="M1238.6 142.4 L1243.2 147.2 L1247.8 142.4" fill="none" stroke="#666" stroke-width="1.5"/>
<path d="M1556.4 142.4 L1561 147.2 L1565.6 142.4" fill="none" stroke="#666" stroke-width="1.5"/>
<text transform="translate(952.43,197.80) scale(0.9866,1)" font-family='"Liberation Sans", sans-serif' font-weight="700" font-size="17.10" fill="#111" >Query</text>
<text transform="translate(970.64,231.60) scale(1.0000,1)" font-family='"Liberation Mono", monospace' font-weight="400" font-size="15.15" fill="#333" >1</text>
<text x="1004.10" y="231.9" font-family='"Liberation Mono", monospace' font-size="16.18" fill="#770088">select</text>
<text x="1072.07" y="231.9" font-family='"Liberation Mono", monospace' font-size="16.18" fill="#333">*</text>
<text x="1091.49" y="231.9" font-family='"Liberation Mono", monospace' font-size="16.18" fill="#770088">from</text>
<text x="1140.04" y="231.9" font-family='"Liberation Mono", monospace' font-size="16.18" fill="#333">flights</text>
<text transform="translate(968.59,581.20) scale(0.9978,1)" font-family='"Liberation Sans", sans-serif' font-weight="400" font-size="16.23" fill="#222" >Console</text>
<path d="M1417.7 573.4 L1425 577.8 L1417.7 582.2 Z" fill="#111"/>
<path d="M1488 573.5 L1493.5 577.8 L1488 582 Z M1493.5 573.5 L1499 577.8 L1493.5 582 Z" fill="#111"/>
<text transform="translate(1432.26,582.00) scale(0.9762,1)" font-family='"Liberation Sans", sans-serif' font-weight="400" font-size="15.94" fill="#1a1a1a" >Run</text>
<text transform="translate(1504.70,582.00) scale(1.0178,1)" font-family='"Liberation Sans", sans-serif' font-weight="400" font-size="15.94" fill="#1a1a1a" >Run All</text>
</svg>
</div>
</body></html>
